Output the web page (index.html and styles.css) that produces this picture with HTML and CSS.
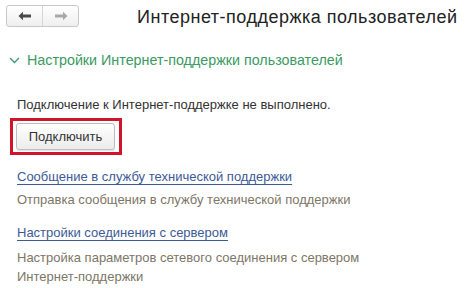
FILE: index.html
```html
<!DOCTYPE html>
<html lang="ru">
<head>
<meta charset="utf-8">
<link rel="stylesheet" href="styles.css">
</head>
<body>
<div class="page">
  <header class="topbar">
    <div class="nav">
      <button class="nav-btn back" aria-label="Назад">
        <svg width="14" height="10" viewBox="0 0 14 10"><path d="M0.5 5 L5 0.8 L5 3.6 L13 3.6 L13 6.4 L5 6.4 L5 9.2 Z" fill="#4a4a4a"/></svg>
      </button>
      <button class="nav-btn fwd" aria-label="Вперёд">
        <svg width="14" height="10" viewBox="0 0 14 10"><path d="M13.5 5 L9 0.8 L9 3.6 L1 3.6 L1 6.4 L9 6.4 L9 9.2 Z" fill="#a8a8a8"/></svg>
      </button>
    </div>
    <h1 class="title">Интернет-поддержка пользователей</h1>
  </header>

  <section class="group">
    <div class="group-head">
      <svg class="chev" width="11" height="7" viewBox="0 0 11 7"><path d="M1 1 L5.5 5.5 L10 1" fill="none" stroke="#3a9a68" stroke-width="1.3"/></svg>
      <span>Настройки Интернет-поддержки пользователей</span>
    </div>

    <div class="body">
      <p class="status">Подключение к Интернет-поддержке не выполнено.</p>
      <div class="highlight">
        <button class="btn">Подключить</button>
      </div>

      <a class="link l1" href="#">Сообщение в службу технической поддержки</a>
      <p class="desc">Отправка сообщения в службу технической поддержки</p>

      <a class="link l2" href="#">Настройки соединения с сервером</a>
      <p class="desc d2">Настройка параметров сетевого соединения с сервером<br>Интернет-поддержки</p>
    </div>
  </section>
</div>
</body>
</html>
```
FILE: styles.css
```css
* { box-sizing: border-box; }
html, body { margin: 0; padding: 0; background: #fff; }
body {
  font-family: "Liberation Sans", Arial, sans-serif;
  font-size: 13px;
  color: #333;
  width: 466px;
  height: 288px;
  overflow: hidden;
}
.page { padding: 5px 0 0 0; }
.topbar {
  display: flex;
  align-items: center;
  height: 22px;
  padding-left: 6px;
}
.nav {
  display: flex;
  width: 73px;
  height: 22px;
  border: 1px solid #c8c8c8;
  border-radius: 3px;
  background: linear-gradient(#ffffff, #efefef);
  overflow: hidden;
}
.nav-btn {
  flex: 1;
  border: 0;
  background: transparent;
  padding: 0;
  display: flex;
  align-items: center;
  justify-content: center;
}
.nav-btn.back { border-right: 1px solid #d6d6d6; }
.title {
  margin: 0 0 0 58px;
  padding-top: 2px;
  font-weight: normal;
  font-size: 18px;
  letter-spacing: 0.5px;
  color: #222;
  line-height: 22px;
}
.group { margin-top: 23px; }
.group-head {
  display: flex;
  align-items: center;
  padding-left: 9px;
  color: #3a9a62;
  font-size: 14.3px;
  height: 20px;
}
.chev { margin-right: 7px; margin-top: 1px; }
.body { padding-left: 17px; }
.status {
  margin: 27px 0 0 0;
  line-height: 16px;
  color: #333;
}
.highlight {
  margin: 5px 0 0 -7px;
  width: 112px;
  height: 37px;
  border: 3px solid #d0142c;
  padding: 2px 0 0 3px;
}
.btn {
  display: block;
  width: 99px;
  height: 27px;
  border: 1px solid #bdbdbd;
  border-radius: 3px;
  background: linear-gradient(#ffffff, #ececec);
  font-family: inherit;
  font-size: 13px;
  color: #333;
  box-shadow: 0 1px 1px rgba(0,0,0,0.12);
  padding: 0;
}
.link {
  display: inline-block;
  color: #3c5a96;
  text-decoration: underline;
  text-underline-offset: 3px;
  line-height: 16px;
}
.l1 { margin-top: 14px; }
.desc {
  margin: 4.5px 0 0 0;
  color: #7d7667;
  line-height: 19px;
}
.l2 { margin-top: 16.5px; }
.d2 { margin-top: 6.5px; }
```
